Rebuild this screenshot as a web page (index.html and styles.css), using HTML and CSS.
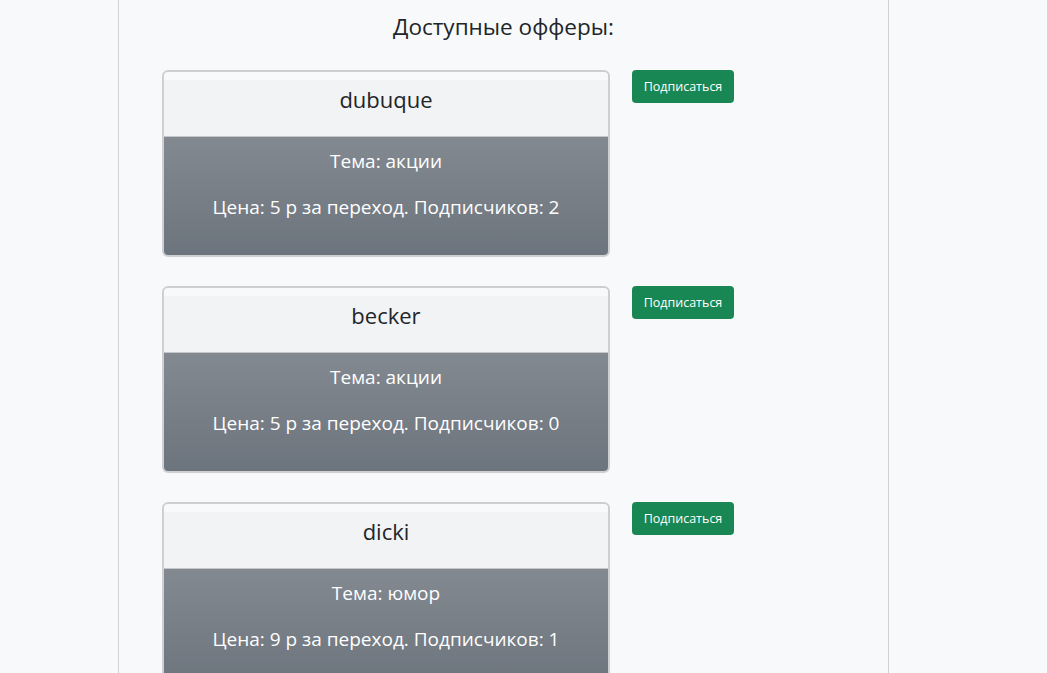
FILE: index.html
```html
<!DOCTYPE html>
<html lang="ru">
<head>
<meta charset="utf-8">
<title>Доступные офферы</title>
<link rel="stylesheet" href="styles.css">
</head>
<body>
<main class="page">
  <h2 class="title">Доступные офферы:</h2>
  <div class="offer">
    <div class="card">
      <div class="card-header">dubuque</div>
      <div class="card-body">
        <p>Тема: акции</p>
        <p>Цена: 5 р за переход. Подписчиков: 2</p>
      </div>
    </div>
    <button class="btn">Подписаться</button>
  </div>
  <div class="offer">
    <div class="card">
      <div class="card-header">becker</div>
      <div class="card-body">
        <p>Тема: акции</p>
        <p>Цена: 5 р за переход. Подписчиков: 0</p>
      </div>
    </div>
    <button class="btn">Подписаться</button>
  </div>
  <div class="offer">
    <div class="card">
      <div class="card-header">dicki</div>
      <div class="card-body">
        <p>Тема: юмор</p>
        <p>Цена: 9 р за переход. Подписчиков: 1</p>
      </div>
    </div>
    <button class="btn">Подписаться</button>
  </div>
</main>
</body>
</html>
```

FILE: styles.css
```css
html, body {
  margin: 0;
  padding: 0;
  background: #f8f9fa;
  font-family: "Open Sans", "Noto Sans", sans-serif;
  color: #212529;
}
body {
  overflow: hidden;
  height: 673px;
}
.page {
  margin-left: 118px;
  min-height: 673px;
  border-left: 1px solid #cfd1d3;
  border-right: 1px solid #cfd1d3;
  padding: 12px 0 0 43px;
  box-sizing: content-box;
  width: 726px;
}
.title {
  margin: 0 0 28px -43px;
  text-align: center;
  font-weight: 400;
  font-size: 22.5px;
  line-height: 30px;
}
.offer {
  display: flex;
  align-items: flex-start;
  gap: 22px;
  margin-bottom: 29px;
}
.card {
  width: 444px;
  border: 2px solid #cdcfd2;
  border-radius: 6px;
  background: #f8f9fa;
  padding-top: 8px;
  overflow: hidden;
}
.card-header {
  background: #f2f3f5;
  height: 57px;
  border-bottom: 1px solid #c4c6c9;
  text-align: center;
  font-size: 22px;
  line-height: 38px;
  box-sizing: border-box;
}
.card-body {
  height: 118px;
  background: linear-gradient(180deg, #838990 0%, #6c747d 100%);
  color: #fff;
  text-align: center;
  font-size: 19px;
  padding-top: 12px;
  box-sizing: border-box;
}
.card-body p {
  margin: 0 0 21px;
  line-height: 25px;
}
.btn {
  width: 102px;
  height: 33px;
  background: #198754;
  color: #fff;
  border: none;
  border-radius: 4px;
  font-family: inherit;
  font-size: 12.5px;
  padding: 0;
}
```
